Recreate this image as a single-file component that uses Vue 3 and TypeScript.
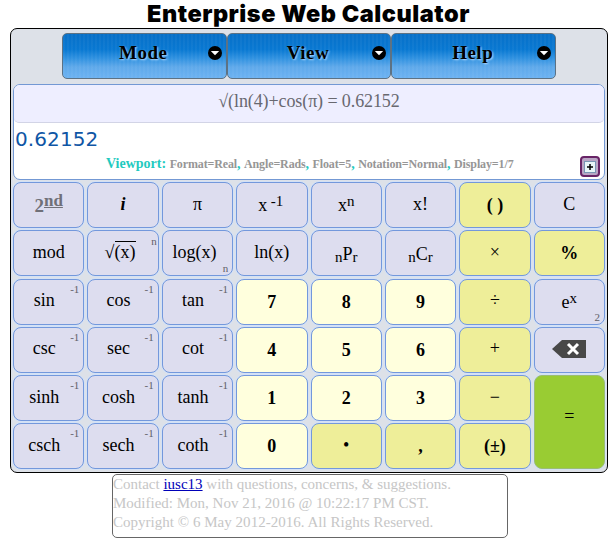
<script setup lang="ts">
interface Key {
  label: string
  kind?: string
  tone?: string
  note?: string
  low?: string
}

const menus: string[] = ['Mode', 'View', 'Help']

const inv = (label: string): Key => ({ label, kind: 'inv', note: '-1' })
const num = (label: string): Key => ({ label, kind: 'bold', tone: 'num' })
const op = (label: string, kind = 'op'): Key => ({ label, kind, tone: 'opr' })

const keys: Key[] = [
  { label: '2nd', kind: 'second' }, { label: 'i', kind: 'imag' }, { label: 'π' }, { label: 'x⁻¹', kind: 'recip' },
  { label: 'xn', kind: 'power' }, { label: 'x!' }, op('( )', 'bold'), { label: 'C' },
  { label: 'mod' }, { label: '√(x)', kind: 'root', note: 'n' }, { label: 'log(x)', kind: 'log', low: 'n' }, { label: 'ln(x)' },
  { label: 'P', kind: 'comb' }, { label: 'C', kind: 'comb' }, op('×'), op('%', 'bold percent'),
  inv('sin'), inv('cos'), inv('tan'), num('7'), num('8'), num('9'), op('÷'), { label: 'ex', kind: 'exp', low: '2' },
  inv('csc'), inv('sec'), inv('cot'), num('4'), num('5'), num('6'), op('+'), { label: '', kind: 'back' },
  inv('sinh'), inv('cosh'), inv('tanh'), num('1'), num('2'), num('3'), op('−'), { label: '=', kind: 'equals', tone: 'go' },
  inv('csch'), inv('sech'), inv('coth'), num('0'), op('•', 'dot'), op(',', 'bold'), op('(±)', 'bold sign'),
]
</script>

<template>
  <div class="page">
    <h1 class="title">Enterprise Web Calculator</h1>
    <main class="calc">
      <nav class="menus">
        <button v-for="m in menus" :key="m" class="menu">
          <span class="menu-text">{{ m }}</span>
          <svg class="arrow" viewBox="0 0 14 14" width="14" height="14">
            <circle cx="7" cy="7" r="7" fill="#000" />
            <path d="M2.8 5h8.4L7 9.2z" fill="#fff" />
          </svg>
        </button>
      </nav>
      <section class="screen">
        <div class="formula"><span>√(ln(4)+cos(π) = 0.62152</span></div>
        <div class="result">0.62152</div>
        <div class="status">
          <b>Viewport:</b> <small>Format=Real</small>, <small>Angle=Rads</small>, <small>Float=5</small>, <small>Notation=Normal</small>, <small>Display=1/7</small>
        </div>
        <button class="expand">
          <svg viewBox="0 0 12 12" width="12" height="12">
            <rect x=".5" y=".5" width="11" height="11" fill="#e8f5f7" stroke="#7896b4" />
            <path d="M3 6h6M6 3v6" stroke="#000" stroke-width="1.5" />
          </svg>
        </button>
      </section>
      <section class="keys">
        <button v-for="(k, i) in keys" :key="i" class="key" :class="[k.kind, k.tone]">
          <span v-if="k.kind === 'second'" class="label">2<sup>nd</sup></span>
          <span v-else-if="k.kind === 'recip'" class="label">x <sup>-1</sup></span>
          <span v-else-if="k.kind === 'power'" class="label">x<sup>n</sup></span>
          <span v-else-if="k.kind === 'exp'" class="label">e<sup>x</sup></span>
          <span v-else-if="k.kind === 'comb'" class="label"><sub>n</sub>{{ k.label }}<sub>r</sub></span>
          <span v-else-if="k.kind === 'root'" class="label">√<span class="over">(x)</span></span>
          <svg v-else-if="k.kind === 'back'" class="erase" viewBox="0 0 36 20" width="36" height="20">
            <path d="M1 10L11 1h24v18H11z" fill="#484848" />
            <path d="M17 5l10 10M27 5L17 15" stroke="#fff" stroke-width="3" />
          </svg>
          <span v-else class="label">{{ k.label }}</span>
          <span v-if="k.note" class="note">{{ k.note }}</span>
          <span v-if="k.low" class="low">{{ k.low }}</span>
        </button>
      </section>
    </main>
    <footer class="foot">
      <div>Contact <a>iusc13</a> with questions, concerns, &amp; suggestions.</div>
      <div>Modified: Mon, Nov 21, 2016 @ 10:22:17 PM CST.</div>
      <div class="rights">Copyright © 6 May 2012-2016. All Rights Reserved.</div>
    </footer>
  </div>
</template>

<style>
body { background: #fff; }
</style>

<style scoped>
.page {
  width: 616px;
  height: 542px;
  overflow: hidden;
  box-sizing: border-box;
  font-family: "Liberation Serif", serif;
}
.page * { box-sizing: border-box; }
button { font-family: inherit; padding: 0; margin: 0; color: #000; }
.title {
  margin: 0 0 0 147px;
  height: 28px;
  font: 900 23.5px/28px Inter, sans-serif;
  letter-spacing: .53px;
  white-space: nowrap;
}
.calc {
  width: 598px;
  height: 445px;
  margin-left: 10px;
  padding: 4px 2px 2px;
  border: 1px solid #000;
  border-radius: 7px;
  background: #dde1e8;
}
.menus { display: flex; width: 494px; margin-left: 49px; height: 46px; }
.menu {
  flex: 1;
  display: flex;
  align-items: center;
  padding: 0 4px 6px 0;
  border: 1px solid #5d7284;
  border-radius: 5px;
  background:
    repeating-linear-gradient(90deg, rgba(255,255,255,.035) 0 2px, transparent 2px 4px),
    linear-gradient(#0870c8, #0878d2 35%, #2f91e0 55%, #5fa9ea 75%, #6cb2f2);
}
.menu-text {
  flex: 1;
  padding-left: 16px;
  font-size: 19px;
  font-weight: bold;
  letter-spacing: .5px;
  text-shadow: 1px 1px 2px #b8dcff;
}
.arrow { flex: none; }
.screen {
  position: relative;
  margin-top: 5px;
  height: 96px;
  border: 1px solid #7398d4;
  border-radius: 7px;
  background: #fff;
  overflow: hidden;
}
.formula {
  height: 38px;
  border-bottom: 1px solid #d2d4e6;
  border-radius: 0 0 5px 5px;
  background: #eeeeff;
  color: #686870;
  font-size: 18px;
  letter-spacing: -.1px;
  line-height: 33px;
  text-align: center;
  white-space: nowrap;
}
.result {
  height: 32px;
  padding-left: 1px;
  color: #0f56a5;
  font: 20px/32px "DejaVu Sans", sans-serif;
  letter-spacing: .1px;
}
.status {
  padding-left: 92px;
  line-height: 18px;
  font-size: 14px;
  font-weight: bold;
  color: #1fcac0;
  white-space: nowrap;
}
.status small { font-size: 12px; letter-spacing: -.13px; color: #969696; }
.expand {
  position: absolute;
  right: 4px;
  bottom: 2px;
  width: 20px;
  height: 21px;
  display: grid;
  place-items: center;
  border: 2px solid #682466;
  border-radius: 4px;
  background: #b9a5c4;
}
.keys {
  display: grid;
  grid-template-columns: repeat(8, 1fr);
  grid-template-rows: repeat(6, 46px);
  gap: 2.3px 3px;
  margin-top: 2px;
}
.key {
  position: relative;
  display: flex;
  align-items: center;
  justify-content: center;
  padding-bottom: 3px;
  border: 1px solid #7398dc;
  border-radius: 8px;
  background: #ddddef;
  box-shadow: 0 0 0 1px #d3e1f6;
  font-size: 18px;
  line-height: 20px;
  white-space: nowrap;
}
.label { display: block; }
.num { background: #ffffdd; }
.opr { background: #eeee99; }
.bold { font-weight: bold; padding-bottom: 0; }
.inv { padding-right: 9px; }
sup, sub { font-size: 15px; line-height: 0; }
sup { vertical-align: 5px; }
sub { vertical-align: -2px; }
.recip, .power, .exp, .comb { padding-bottom: 0; }
.recip .label { word-spacing: -1px; }
.recip { padding-right: 2px; }
.comb { padding-top: 1px; }
.second { font-weight: bold; color: #707078; padding: 2px 0 0; font-size: 19px; }
.second sup { text-decoration: underline; font-size: 17px; vertical-align: 6px; }
.imag { font-weight: bold; font-style: italic; }
.root { padding-right: 6px; }
.over { border-top: 1px solid #000; }
.log { padding-right: 6px; }
.equals { grid-row: span 2; padding-bottom: 12px; background: #99cc33; border-color: #9bbd73; }
.note, .low { position: absolute; font-size: 11px; line-height: 12px; color: #606068; }
.note { right: 4px; top: 3px; }
.root .note { right: 1px; top: 4px; }
.low { right: 4px; bottom: 1px; }
.erase { margin-top: 1px; }
.foot {
  width: 396px;
  height: 64px;
  margin: 1px 0 0 112px;
  border: 1px solid #666;
  border-radius: 5px;
  font-size: 15px;
  line-height: 19px;
  color: #c6c6c6;
  white-space: nowrap;
}
.foot a { color: #0000b8; text-decoration: underline; }
.rights { letter-spacing: .02px; }
</style>
